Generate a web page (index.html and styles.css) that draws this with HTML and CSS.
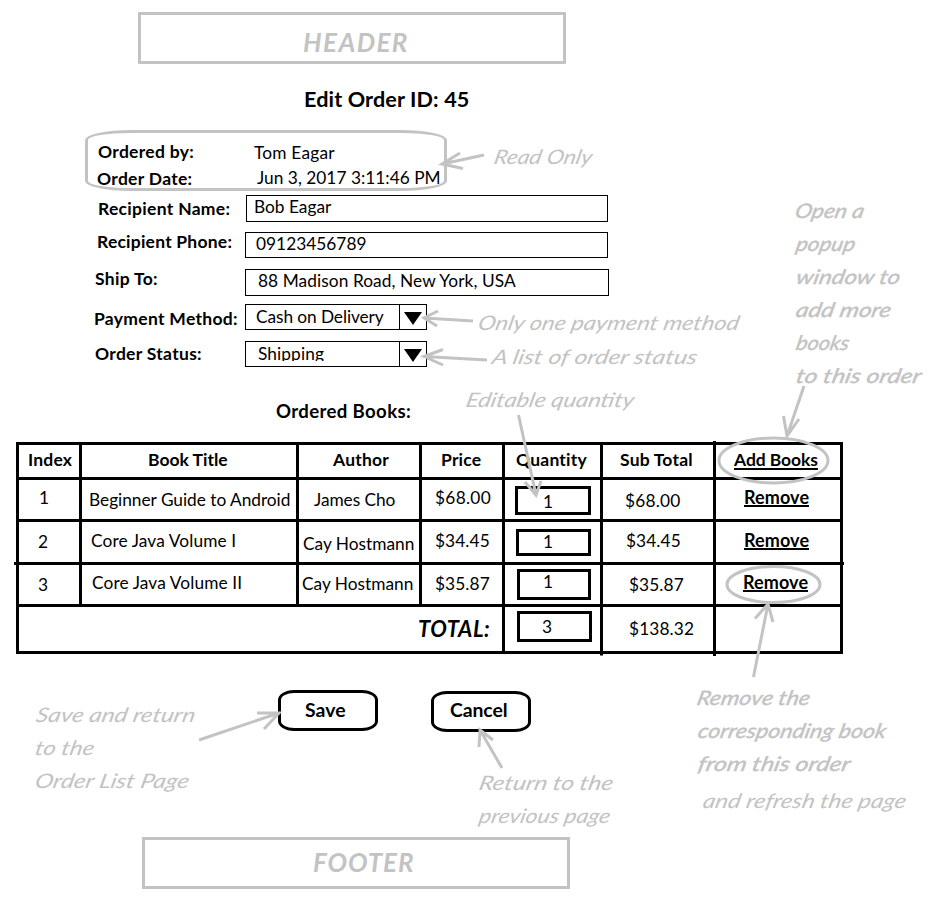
FILE: index.html
```html
<!DOCTYPE html>
<html lang="en">
<head>
<meta charset="utf-8">
<title>Edit Order</title>
<link rel="stylesheet" href="styles.css">
</head>
<body>
<div class="page">
  <header class="band band-top"><span>HEADER</span></header>
  <h1>Edit Order ID: 45</h1>

  <form class="order">
    <div class="readonly">
      <div class="row by"><label>Ordered by:</label><span class="value">Tom Eagar</span></div>
      <div class="row date"><label>Order Date:</label><span class="value">Jun 3, 2017 3:11:46 PM</span></div>
    </div>
    <div class="row name"><label>Recipient Name:</label><div class="field"><span>Bob Eagar</span></div></div>
    <div class="row phone"><label>Recipient Phone:</label><div class="field"><span>09123456789</span></div></div>
    <div class="row ship"><label>Ship To:</label><div class="field"><span>88 Madison Road, New York, USA</span></div></div>
    <div class="row pay"><label>Payment Method:</label><div class="field select"><span>Cash on Delivery</span><i><svg width="18" height="13" viewBox="0 0 18 13"><path d="M0 0H18L9 13Z"/></svg></i></div></div>
    <div class="row status"><label>Order Status:</label><div class="field select"><span>Shipping</span><i><svg width="18" height="13" viewBox="0 0 18 13"><path d="M0 0H18L9 13Z"/></svg></i></div></div>
  </form>

  <h2>Ordered Books:</h2>
  <div class="books">
    <div class="tr head">
      <b>Index</b><b>Book Title</b><b>Author</b><b>Price</b><b>Quantity</b><b>Sub Total</b><b><a>Add Books</a></b>
    </div>
    <div class="tr r1">
      <div>1</div><div>Beginner Guide to Android</div><div>James Cho</div><div>$68.00</div><div><span class="qty">1</span></div><div>$68.00</div><div><a>Remove</a></div>
    </div>
    <div class="tr r2">
      <div>2</div><div>Core Java Volume I</div><div>Cay Hostmann</div><div>$34.45</div><div><span class="qty">1</span></div><div>$34.45</div><div><a>Remove</a></div>
    </div>
    <div class="tr r3">
      <div>3</div><div>Core Java Volume II</div><div>Cay Hostmann</div><div>$35.87</div><div><span class="qty">1</span></div><div>$35.87</div><div><a>Remove</a></div>
    </div>
    <div class="tr total">
      <div>TOTAL:</div><div><span class="qty">3</span></div><div>$138.32</div><div></div>
    </div>
  </div>

  <div class="actions">
    <div class="btn save">Save</div>
    <div class="btn cancel">Cancel</div>
  </div>

  <footer class="band band-bottom"><span>FOOTER</span></footer>

  <svg class="notes" width="928" height="900" viewBox="0 0 928 900">
    <g class="overrun">
      <path d="M14 563.5H844M601.5 650V655.5M714.5 441V656"/>
    </g>
    <g class="ink">
      <path d="M484 155L442 164M460 153L442 164L463 168.500"/>
      <path d="M473 321L424 318M438 311L424 318L437 326"/>
      <path d="M487 360L424 356.500M443 349.500L424 356.500L443 365"/>
      <path d="M518.500 415L536 495M525 482L536 495L541 481"/>
      <path d="M804 386L787 436M783.500 416L787 436L799 419"/>
      <path d="M753.500 677L768 604M755 618.500L768 604L773 622"/>
      <path d="M199 740L279 713M257 713H279L264 729"/>
      <path d="M502 768L480 730M493 740L480 730L479 747"/>
      <ellipse cx="773.500" cy="460.500" rx="54.500" ry="22.500"/>
      <ellipse cx="773.500" cy="584.500" rx="46.500" ry="18"/>
    </g>
    <g class="script">
      <text transform="translate(493 163.500) skewX(-12)" lengthAdjust="spacingAndGlyphs" textLength="98">Read Only</text>
      <text transform="translate(477 329.500) skewX(-12)" lengthAdjust="spacingAndGlyphs" textLength="261">Only one payment method</text>
      <text transform="translate(491 363.500) skewX(-12)" lengthAdjust="spacingAndGlyphs" textLength="205">A list of order status</text>
      <text transform="translate(465 406.500) skewX(-12)" lengthAdjust="spacingAndGlyphs" textLength="168">Editable quantity</text>
      <text transform="translate(35 722) skewX(-12)" lengthAdjust="spacingAndGlyphs" textLength="159">Save and return</text>
      <text transform="translate(34 755) skewX(-12)" lengthAdjust="spacingAndGlyphs" textLength="59">to the</text>
      <text transform="translate(34 788) skewX(-12)" lengthAdjust="spacingAndGlyphs" textLength="154">Order List Page</text>
      <text transform="translate(478 790) skewX(-12)" lengthAdjust="spacingAndGlyphs" textLength="134">Return to the</text>
      <text transform="translate(478 823) skewX(-12)" lengthAdjust="spacingAndGlyphs" textLength="131">previous page</text>
      <text transform="translate(702 808) skewX(-12)" lengthAdjust="spacingAndGlyphs" textLength="203">and refresh the page</text>
    </g>
    <g class="script strong">
      <text transform="translate(794 218) skewX(-12)" lengthAdjust="spacingAndGlyphs" textLength="69">Open a</text>
      <text transform="translate(795 251) skewX(-12)" lengthAdjust="spacingAndGlyphs" textLength="59">popup</text>
      <text transform="translate(795 284) skewX(-12)" lengthAdjust="spacingAndGlyphs" textLength="104">window to</text>
      <text transform="translate(795 317) skewX(-12)" lengthAdjust="spacingAndGlyphs" textLength="95">add more</text>
      <text transform="translate(795 350) skewX(-12)" lengthAdjust="spacingAndGlyphs" textLength="53">books</text>
      <text transform="translate(795 383) skewX(-12)" lengthAdjust="spacingAndGlyphs" textLength="125">to this order</text>
      <text transform="translate(696 705) skewX(-12)" lengthAdjust="spacingAndGlyphs" textLength="113">Remove the</text>
      <text transform="translate(697 738) skewX(-12)" lengthAdjust="spacingAndGlyphs" textLength="188">corresponding book</text>
      <text transform="translate(697 771) skewX(-12)" lengthAdjust="spacingAndGlyphs" textLength="152">from this order</text>
    </g>
  </svg>
</div>
</body>
</html>
```
FILE: styles.css
```css
* { box-sizing: border-box; }
body {
  margin: 0;
  background: #fff;
  color: #000;
  font: 17.3px/20px Lato, "Liberation Sans", sans-serif;
  letter-spacing: .12px;
}
.page {
  position: relative;
  display: flow-root;
  width: 928px;
  height: 900px;
  overflow: hidden;
  white-space: nowrap;
}

/* header and footer placeholders */
.band {
  width: 428px;
  height: 52px;
  border: 3px solid #c3c3c3;
  color: #c3c3c3;
  font: italic 700 26px/30px Lato, sans-serif;
  letter-spacing: 1.4px;
}
.band-top { margin: 12px 0 0 138px; padding: 12px 0 0 162px; }
.band-bottom { margin: 105px 0 0 142px; padding: 7px 0 0 168px; letter-spacing: .9px; }

h1 {
  margin: 21px 0 0 304px;
  font-size: 21.6px;
  line-height: 28px;
  letter-spacing: .12px;
}

/* order form */
.order { margin-top: 17px; }
.readonly {
  width: 362px;
  height: 61px;
  margin-left: 85px;
  border: 3px solid #c3c3c3;
  border-radius: 46px / 10px;
}
.row { display: flex; align-items: flex-start; }
label { font-size: 17.5px; font-weight: 700; letter-spacing: .3px; }
.readonly label { width: 156px; }
.by { padding: 9px 0 0 10px; height: 34px; }
.by .value { padding-top: 1px; letter-spacing: .2px; }
.date { padding: 1px 0 0 9px; }
.date label { padding-top: 1px; }
.date .value { letter-spacing: .02px; }
.readonly .date label { width: 160px; }
.order > .row > label { width: 152px; }
.field {
  width: 363px;
  height: 26px;
  border: 1px solid #000;
  overflow: hidden;
}
.name { margin-top: 4px; padding-left: 98px; }
.name label { padding-top: 4px; }
.order > .name > label { width: 148px; }
.name .field { width: 362px; height: 27px; padding: 1px 7px; letter-spacing: 0; }
.phone { margin-top: 10px; padding-left: 97px; }
.order > .phone > label { width: 148px; letter-spacing: .22px; }
.phone .field { padding: 1px 10px 0; letter-spacing: .02px; }
.ship { margin-top: 11px; padding-left: 95px; }
.order > .ship > label { width: 150px; }
.ship .field { width: 364px; height: 27px; padding: 1px 12px 0; letter-spacing: .08px; }
.pay { margin-top: 8px; padding-left: 94px; }
.order > .pay > label { width: 151px; padding-top: 5px; }
.status { margin-top: 11px; padding-left: 95px; }
.order > .status > label { width: 150px; padding-top: 3px; }
.field.select { display: flex; width: 182px; }
.select span { width: 153px; padding: 2px 0 0 10px; letter-spacing: -.08px; }
.status .select span { height: 19px; overflow: hidden; padding-left: 12px; letter-spacing: .1px; }
.select i { flex: 1; border-left: 1px solid #000; padding: 7px 0 0 4px; line-height: 0; }

h2 {
  margin: 33px 0 0 276px;
  font-size: 18.6px;
  line-height: 22px;
  letter-spacing: .36px;
}

/* ordered books */
.books {
  width: 827px;
  margin: 20px 0 0 16px;
  border: solid #000;
  border-width: 3px 0 0 3px;
}
.tr {
  display: grid;
  grid-template-columns: 63px 217px 123px 83px 98px 113px 127px;
}
.tr > * { border: solid #000; border-width: 0 3px 3px 0; padding: 5px 0 0 9px; }
.head { height: 35px; font-size: 17.5px; letter-spacing: .2px; }
.head > :nth-child(2) { padding-left: 66px; letter-spacing: 0; }
.head > :nth-child(3) { padding-left: 34px; }
.head > :nth-child(4) { padding-left: 19px; }
.head > :nth-child(5) { padding-left: 11px; }
.head > :nth-child(6) { padding-left: 17px; }
.head > :nth-child(7) { padding-left: 18px; letter-spacing: -.08px; }
.books a {
  display: inline-block;
  height: 21px;
  border-bottom: 2px solid #000;
  font-size: 17.5px;
  font-weight: 700;
}
.head a { height: 20px; }
.r1 a, .r2 a, .r3 a { width: 65px; height: 20px; font-size: 18px; letter-spacing: .1px; }
.r1 { height: 42px; }
.r2 { height: 43px; }
.r3 { height: 42px; }
.total { grid-template-columns: 486px 98px 113px 127px; height: 47px; }

.r1 > :nth-child(1) { padding: 8px 0 0 20px; }
.r1 > :nth-child(2) { padding: 10px 0 0 7px; letter-spacing: -.02px; }
.r1 > :nth-child(3) { padding: 10px 0 0 15px; letter-spacing: -.05px; }
.r1 > :nth-child(4) { padding: 8px 0 0 13px; letter-spacing: .3px; }
.r1 > :nth-child(5) { padding: 6px 0 0 10px; }
.r1 > :nth-child(6) { padding: 11px 0 0 22px; letter-spacing: .2px; }
.r1 > :nth-child(7) { padding: 7px 0 0 28px; }

.r2 > :nth-child(1) { padding: 10px 0 0 19px; }
.r2 > :nth-child(2) { padding: 9px 0 0 9px; }
.r2 > :nth-child(3) { padding: 12px 0 0 4px; letter-spacing: 0; }
.r2 > :nth-child(4) { padding: 9px 0 0 13px; letter-spacing: .1px; }
.r2 > :nth-child(5) { padding: 7px 0 0 11px; }
.r2 > :nth-child(6) { padding: 9px 0 0 23px; letter-spacing: .1px; }
.r2 > :nth-child(7) { padding: 8px 0 0 28px; }

.r3 > :nth-child(1) { padding: 10px 0 0 19px; }
.r3 > :nth-child(2) { padding: 8px 0 0 10px; }
.r3 > :nth-child(3) { padding: 9px 0 0 3px; letter-spacing: 0; }
.r3 > :nth-child(4) { padding: 9px 0 0 13px; letter-spacing: .1px; }
.r3 > :nth-child(5) { padding: 4px 0 0 12px; }
.r3 > :nth-child(6) { padding: 10px 0 0 26px; letter-spacing: .1px; }
.r3 > :nth-child(7) { padding: 7px 0 0 27px; }

.total > :nth-child(1) {
  padding: 12px 0 0 399px;
  font-size: 22px;
  font-style: italic;
  font-weight: 700;
  letter-spacing: .5px;
}
.total > :nth-child(2) { padding: 4px 0 0 12px; }
.total > :nth-child(3) { padding: 12px 0 0 26px; }

.qty {
  display: block;
  width: 75px;
  height: 31px;
  border: 3px solid #000;
  padding: 3px 0 0 22px;
}
.r1 .qty { width: 76px; height: 29px; padding: 3px 0 0 25px; }
.r2 .qty { height: 27px; padding: 0 0 0 24px; }
.r3 .qty { width: 74px; padding: 0 0 0 23px; }

/* buttons */
.actions { display: flex; gap: 53px; margin: 36px 0 0 278px; }
.btn {
  width: 100px;
  height: 41px;
  border: 3px solid #000;
  border-radius: 16px / 10px;
  padding: 7px 0 0 24px;
  font-size: 19.4px;
  font-weight: 700;
  letter-spacing: .1px;
}
.cancel { margin-top: 1px; padding: 6px 0 0 16px; letter-spacing: -.1px; }

/* hand-drawn annotations lying over the page */
.notes { position: absolute; left: 0; top: 0; }
.notes path, .notes ellipse { fill: none; stroke: #c3c3c3; stroke-width: 3; }
.notes .overrun path { stroke: #000; }
.script text {
  fill: #c3c3c3;
  font: italic 400 20px Lato, sans-serif;
  letter-spacing: 0;
}
.script.strong text { stroke: #c3c3c3; stroke-width: .4px; }
```
